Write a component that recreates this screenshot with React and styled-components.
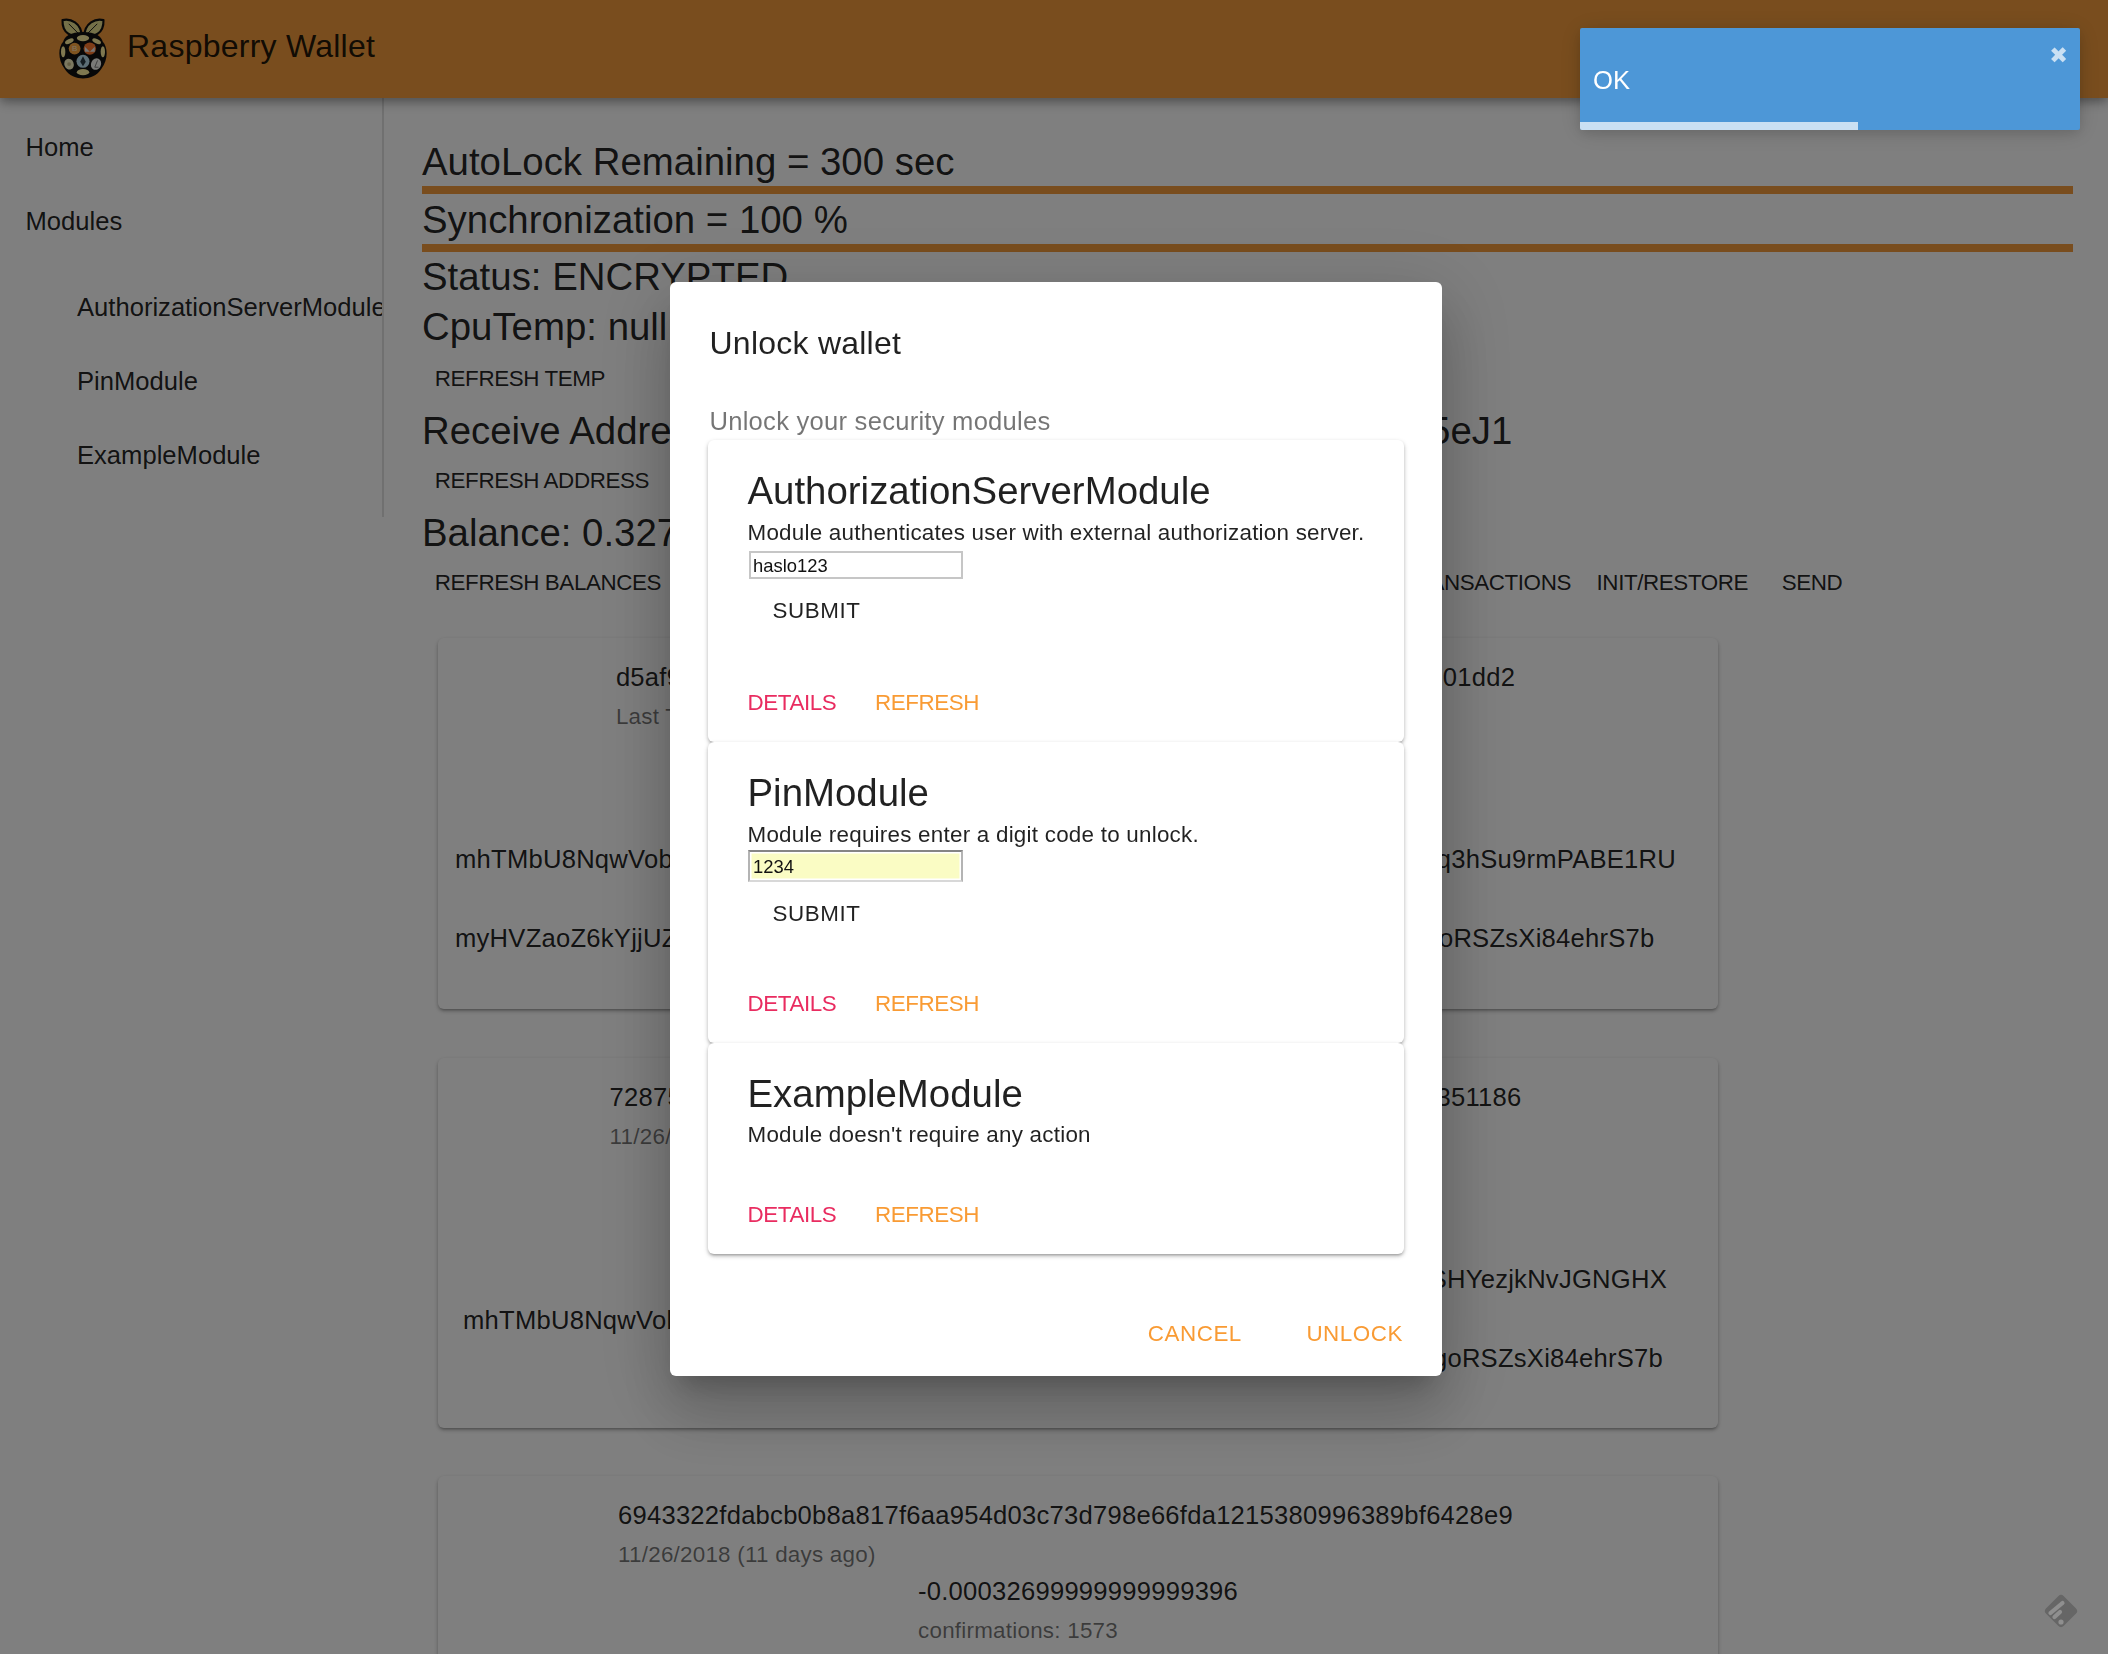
import React from 'react';
import styled, { createGlobalStyle } from 'styled-components';

const Global = createGlobalStyle`
  html, body { margin: 0; padding: 0; height: 100%; overflow: hidden; background: #fff; }
  body { font-family: "Liberation Sans", Arial, sans-serif; color: rgba(0,0,0,.87); }
  * { box-sizing: border-box; }
`;

const Page = styled.div`
  height: 1654px;
  overflow: hidden;
  display: flex;
  flex-direction: column;
`;
const AppBar = styled.header`
  flex: none;
  height: 98px;
  background: #f29b3c;
  display: flex;
  align-items: center;
  gap: 19px;
  padding: 0 0 3px 58px;
  position: relative;
  z-index: 2;
  box-shadow: 0 3px 8px -1px rgba(0,0,0,.2), 0 6px 10px 0 rgba(0,0,0,.14), 0 2px 16px 0 rgba(0,0,0,.12);
`;
const AppTitle = styled.h1`
  margin: 0 0 2px;
  font-size: 32px;
  font-weight: 400;
  line-height: 1.3;
  letter-spacing: .24px;
`;
const Body = styled.div`
  flex: 1;
  display: flex;
  align-items: flex-start;
  min-height: 0;
`;
const Sidebar = styled.nav`
  flex: none;
  width: 384px;
  height: 419px;
  padding: 13px 0;
  border-right: 2px solid rgba(0,0,0,.12);
  overflow: hidden;
`;
const NavItem = styled.div`
  height: 73.6px;
  display: flex;
  align-items: center;
  padding-left: 25.5px;
  font-size: 25.6px;
  white-space: nowrap;
`;
const NestedList = styled.div`
  padding-top: 12.8px;
  ${NavItem} { padding-left: 77px; height: 74px; }
`;
const Main = styled.main`
  flex: 1;
  min-width: 0;
  padding: 37px 35px 0 38px;
`;
const Heading = styled.div`
  font-size: 38.4px;
  line-height: 50px;
  white-space: nowrap;
  padding-top: ${p => p.$nudge || 0}px;
  margin-bottom: ${p => -(p.$nudge || 0)}px;
`;
const Progress = styled.div`
  height: 8px;
  margin-top: ${p => p.$mt || 0}px;
  background: #f29b3c;
  position: relative;
`;
const ButtonRow = styled.div`
  display: flex;
`;
const Btn = styled.button`
  appearance: none;
  border: 0;
  background: none;
  margin: 0;
  height: 52px;
  min-width: ${p => p.$min || 102.4}px;
  padding: 2px 12.8px 0;
  font: 400 22.4px "Liberation Sans", Arial, sans-serif;
  letter-spacing: ${p => p.$track ?? -0.4}px;
  color: rgba(0,0,0,.87);
  white-space: nowrap;
`;
const TxList = styled.div`
  margin-top: 30px;
  padding-left: 16px;
  width: 1296px;
  display: flex;
  flex-direction: column;
`;
const TxCard = styled.article`
  flex: none;
  height: ${p => p.$h}px;
  margin-bottom: ${p => p.$gap}px;
  padding-top: 20px;
  border-radius: 6px;
  background: #fff;
  display: flex;
  flex-direction: column;
  box-shadow: 0 2px 5px 0 rgba(0,0,0,.2), 0 2px 3px 0 rgba(0,0,0,.14), 0 3px 2px -2px rgba(0,0,0,.12);
`;
const HashBlock = styled.div`
  align-self: center;
  margin-right: 25px;
`;
const Line = styled.div`
  font-size: 25.6px;
  line-height: 38.4px;
  letter-spacing: .24px;
  white-space: nowrap;
  padding-right: ${p => p.$inset || 0}px;
`;
const Muted = styled(Line)`
  margin-top: 2px;
  font-size: 22.4px;
  color: rgba(0,0,0,.54);
`;
const AmountBlock = styled.div`
  align-self: center;
  width: 320px;
  margin-top: -3px;
`;
const IoRow = styled.div`
  margin-top: 27px;
  padding: 0 ${p => p.$right}px 0 ${p => p.$left}px;
  display: flex;
  justify-content: space-between;
  align-items: center;
`;
const IoColumn = styled.div`
  display: flex;
  flex-direction: column;
  gap: 41px;
  padding-top: ${p => p.$drop || 0}px;
  text-align: ${p => p.$align || 'left'};
`;

const Backdrop = styled.div`
  position: fixed;
  inset: 0;
  z-index: 10;
  padding: 4px 0 0 4px;
  background: rgba(0,0,0,.5);
  display: flex;
  align-items: center;
  justify-content: center;
`;
const Dialog = styled.section`
  width: 772px;
  background: #fff;
  border-radius: 6px;
  padding: 36px 38px 17px;
  box-shadow: 0 18px 24px -11px rgba(0,0,0,.2), 0 38px 61px 5px rgba(0,0,0,.14), 0 14px 74px 13px rgba(0,0,0,.12);
`;
const DialogTitle = styled.h2`
  margin: 0;
  padding-left: 1.5px;
  font-size: 32px;
  font-weight: 400;
  line-height: 51px;
  letter-spacing: .24px;
`;
const DialogText = styled.p`
  margin: 32px 0 -1px;
  padding: 1px 0 0 1.5px;
  font-size: 25.6px;
  line-height: 38.4px;
  letter-spacing: .24px;
  color: rgba(0,0,0,.54);
`;
const ModuleCard = styled.div`
  height: ${p => p.$h}px;
  background: #fff;
  border-radius: 6px;
  padding: 26px 0 0 39.5px;
  display: flex;
  flex-direction: column;
  box-shadow: 0 2px 5px 0 rgba(0,0,0,.2), 0 2px 3px 0 rgba(0,0,0,.14), 0 3px 2px -2px rgba(0,0,0,.12);
`;
const ModuleName = styled.h3`
  margin: 0;
  font-size: 38.4px;
  font-weight: 400;
  line-height: 50px;
`;
const ModuleDesc = styled.p`
  margin: ${p => p.$lift ? -1 : 0}px 0 0;
  font-size: 22.4px;
  line-height: 33.6px;
  letter-spacing: .24px;
`;
const Field = styled.input`
  display: block;
  width: 214px;
  height: 28px;
  margin: 2px 0 0 1.5px;
  padding: 2px 2px 0;
  border: 2px solid #c6c6c6;
  background: #fff;
  font: 400 18.4px "Liberation Sans", Arial, sans-serif;
  color: #111;
  outline: none;
  ${p => p.$filled && `
    width: 215px;
    height: 32px;
    margin: -1.6px 0 0 .5px;
    border-color: #858585 #b4b4b4 #d8d8d8 #b4b4b4;
    background: #fafcc4;
    box-shadow: inset 0 0 0 1.5px #fff;
    padding: 2px 3px 0;
  `}
`;
const SubmitBtn = styled(Btn)`
  align-self: flex-start;
  margin-top: 5px;
  padding: 2px 25px 0;
  min-width: 0;
`;
const CardActions = styled.div`
  margin-top: auto;
  margin-bottom: 14px;
  display: flex;
  gap: 38.5px;
`;
const TextBtn = styled(Btn)`
  min-width: 0;
  padding: 2px 0 0;
  color: ${p => p.$tone === 'pink' ? '#e92c60' : '#f99b34'};
`;
const DialogActions = styled.div`
  margin-top: 53px;
  padding-right: 1px;
  display: flex;
  justify-content: flex-end;
  gap: 64.5px;
`;
const Toast = styled.div`
  position: fixed;
  z-index: 20;
  top: 28px;
  right: 28px;
  width: 500px;
  height: 102px;
  border-radius: 2px;
  overflow: hidden;
  background: #4d97d7;
  color: #fff;
  box-shadow: 0 2px 24px 0 rgba(0,0,0,.14), 0 4px 12px 0 rgba(0,0,0,.1);
`;
const ToastText = styled.div`
  padding: 37px 0 0 13px;
  font-size: 25.6px;
  line-height: 30px;
`;
const ToastClose = styled.span`
  position: absolute;
  top: 13px;
  right: 12px;
  font: 700 22.4px/28px "DejaVu Sans", sans-serif;
  opacity: .7;
`;
const ToastBar = styled.div`
  position: absolute;
  left: 0;
  bottom: 0;
  height: 8px;
  background: rgba(255,255,255,.7);
`;
const FloatingMark = styled.svg`
  position: fixed;
  z-index: 20;
  left: 2041px;
  top: 1592px;
`;

const Logo = () => (
  <svg width="50" height="62" viewBox="50 30 160 200" aria-hidden="true">
    <g stroke="#111" strokeWidth="7" fill="#e8e090" strokeLinejoin="round">
      <path d="M64 40 C90 34 124 48 126 92 C94 98 62 82 64 40 Z" />
      <path d="M196 40 C170 34 136 48 134 92 C166 98 198 82 196 40 Z" />
    </g>
    <path d="M84 52 L118 86 M176 52 L142 86" stroke="#111" strokeWidth="3" />
    <path d="M130 78 C170 78 190 92 194 110 C212 130 210 170 190 196 C176 220 150 228 130 228 C110 228 84 220 70 196 C50 170 48 130 66 110 C70 92 90 78 130 78 Z" fill="#111" />
    <ellipse cx="130" cy="98" rx="20" ry="10" fill="#fff0a0" />
    <ellipse cx="86" cy="108" rx="15" ry="7" transform="rotate(-25 86 108)" fill="#fff0a0" />
    <ellipse cx="174" cy="108" rx="15" ry="7" transform="rotate(25 174 108)" fill="#fff0a0" />
    <ellipse cx="66" cy="142" rx="7" ry="18" fill="#fff0a0" />
    <ellipse cx="194" cy="142" rx="7" ry="18" fill="#fff0a0" />
    <circle cx="103" cy="132" r="19" fill="#ffa840" />
    <text x="103" y="141" textAnchor="middle" fontSize="26" fontFamily="Liberation Sans, sans-serif" fill="#ffe8c8">B</text>
    <circle cx="152" cy="132" r="20" fill="#ff7a30" />
    <path d="M136 142 L136 126 L152 142 L168 126 L168 142 Z" fill="#eee" />
    <circle cx="130" cy="173" r="21" fill="#b8dcec" />
    <path d="M130 157 L139 174 L130 189 L121 174 Z" fill="#2b3a44" />
    <ellipse cx="85" cy="182" rx="15" ry="18" transform="rotate(-20 85 182)" fill="#f8f0c0" />
    <circle cx="85" cy="182" r="6" fill="#c8bc88" />
    <ellipse cx="172" cy="182" rx="16" ry="19" transform="rotate(25 172 182)" fill="#f4f4f0" />
    <path d="M177 170 L168 192 L180 192" stroke="#777" strokeWidth="3" fill="none" />
    <ellipse cx="130" cy="208" rx="20" ry="10" fill="#fff0a0" />
  </svg>
);

const txs = [
  {
    hash: 'd5af9c61e47b08d2032a7915cbe60d4a28f17c3b9e5026da4b8f36e71c901dd2',
    date: 'Last Transaction: 11/26/2018',
    amount: '0.00100000000000000000',
    conf: 'confirmations: 1580',
    left: ['mhTMbU8NqwVobB2LmcK7qZmSNWwBnHWZ', 'myHVZaoZ6kYjjUZ4pLtE1vGxQwT8aNfD'],
    right: [['mr7kQvXaP2nLtEq3hSu9rmPABE1RU', 0], ['n2TgWc5bKdYm9oRSZsXi84ehrS7b', 21.5]],
    pad: [17, 42],
    h: 371,
    gap: 49,
  },
  {
    hash: '72875e1509ac3bd64f82e07c15d9ba36c8f4027e6d1b93a5cf08e47d2ab351186',
    date: '11/26/2018 (11 days ago)',
    amount: '-0.00050000000000000000',
    conf: 'confirmations: 1575',
    left: ['mhTMbU8NqwVobB2LmcK7qZmSNWwBnHWZ'],
    right: [['mk3Pz7VtRa1QfSHYezjkNvJGNGHX', 0], ['n2TgWc5bKdYm9goRSZsXi84ehrS7b', 4]],
    pad: [25, 51],
    drop: 3,
    h: 370,
    gap: 48,
  },
  {
    hash: '6943322fdabcb0b8a817f6aa954d03c73d798e66fda1215380996389bf6428e9',
    date: '11/26/2018 (11 days ago)',
    amount: '-0.00032699999999999396',
    conf: 'confirmations: 1573',
    left: ['mhTMbU8NqwVobB2LmcK7qZmSNWwBnHWZ'],
    right: [['n2TgWc5bKdYm9goRSZsXi84ehrS7b', 0]],
    pad: [25, 51],
    h: 371,
    gap: 48,
  },
];

const modules = [
  { name: 'AuthorizationServerModule', desc: 'Module authenticates user with external authorization server.', value: 'haslo123', h: 302 },
  { name: 'PinModule', desc: 'Module requires enter a digit code to unlock.', value: '1234', filled: true, h: 301 },
  { name: 'ExampleModule', desc: "Module doesn't require any action", h: 211, lift: true },
];

export default function App() {
  return (
    <Page>
      <Global />
      <AppBar>
        <Logo />
        <AppTitle>Raspberry Wallet</AppTitle>
      </AppBar>
      <Body>
        <Sidebar>
          <NavItem>Home</NavItem>
          <NavItem>Modules</NavItem>
          <NestedList>
            <NavItem>AuthorizationServerModule</NavItem>
            <NavItem>PinModule</NavItem>
            <NavItem>ExampleModule</NavItem>
          </NestedList>
        </Sidebar>
        <Main>
          <Heading $nudge={2}>AutoLock Remaining = 300 sec</Heading>
          <Progress $mt={1} />
          <Heading $nudge={1}>Synchronization = 100 %</Heading>
          <Progress />
          <Heading>Status: ENCRYPTED</Heading>
          <Heading>CpuTemp: null</Heading>
          <ButtonRow><Btn>REFRESH TEMP</Btn></ButtonRow>
          <Heading $nudge={2}>Receive Address: mhTMbU8NqwVobB2LncK7qZmSNWwB5eJ1</Heading>
          <ButtonRow><Btn>REFRESH ADDRESS</Btn></ButtonRow>
          <Heading $nudge={2}>Balance: 0.32700000</Heading>
          <ButtonRow>
            <Btn>REFRESH BALANCES</Btn>
            <Btn>REFRESH UTXOS</Btn>
            <Btn>REFRESH RATES</Btn>
            <Btn>REFRESH HISTORY</Btn>
            <Btn>LOAD TRANSACTIONS</Btn>
            <Btn>INIT/RESTORE</Btn>
            <Btn>SEND</Btn>
          </ButtonRow>
          <TxList>
            {txs.map(t => (
              <TxCard key={t.hash} $h={t.h} $gap={t.gap}>
                <HashBlock>
                  <Line>{t.hash}</Line>
                  <Muted>{t.date}</Muted>
                </HashBlock>
                <AmountBlock>
                  <Line>{t.amount}</Line>
                  <Muted>{t.conf}</Muted>
                </AmountBlock>
                <IoRow $left={t.pad[0]} $right={t.pad[1]}>
                  <IoColumn $drop={t.drop}>{t.left.map(a => <Line key={a}>{a}</Line>)}</IoColumn>
                  <IoColumn $align="right">{t.right.map(([a, inset]) => <Line key={a} $inset={inset}>{a}</Line>)}</IoColumn>
                </IoRow>
              </TxCard>
            ))}
          </TxList>
        </Main>
      </Body>

      <Backdrop>
        <Dialog>
          <DialogTitle>Unlock wallet</DialogTitle>
          <DialogText>Unlock your security modules</DialogText>
          {modules.map(m => (
            <ModuleCard key={m.name} $h={m.h}>
              <ModuleName>{m.name}</ModuleName>
              <ModuleDesc $lift={m.lift}>{m.desc}</ModuleDesc>
              {m.value && (
                <>
                  <Field readOnly value={m.value} $filled={m.filled} />
                  <SubmitBtn $track={0.55}>SUBMIT</SubmitBtn>
                </>
              )}
              <CardActions>
                <TextBtn $tone="pink">DETAILS</TextBtn>
                <TextBtn>REFRESH</TextBtn>
              </CardActions>
            </ModuleCard>
          ))}
          <DialogActions>
            <TextBtn $track={0.55}>CANCEL</TextBtn>
            <TextBtn $track={0.55}>UNLOCK</TextBtn>
          </DialogActions>
        </Dialog>
      </Backdrop>

      <Toast>
        <ToastText>OK</ToastText>
        <ToastClose>✖</ToastClose>
        <ToastBar style={{ width: '55.5%' }} />
      </Toast>
      <FloatingMark width="40" height="40" viewBox="0 0 40 40" aria-hidden="true">
        <rect x="7.5" y="6.5" width="25" height="25" rx="4" transform="rotate(45 20 19)" fill="#666" />
        <path d="M9.5 21 L21.5 11" stroke="#8f8f8f" strokeWidth="4.2" strokeLinecap="round" />
        <path d="M13.5 25 L19 20" stroke="#8f8f8f" strokeWidth="4.2" strokeLinecap="round" />
        <circle cx="20" cy="30" r="2.6" fill="#8f8f8f" />
      </FloatingMark>
    </Page>
  );
}
